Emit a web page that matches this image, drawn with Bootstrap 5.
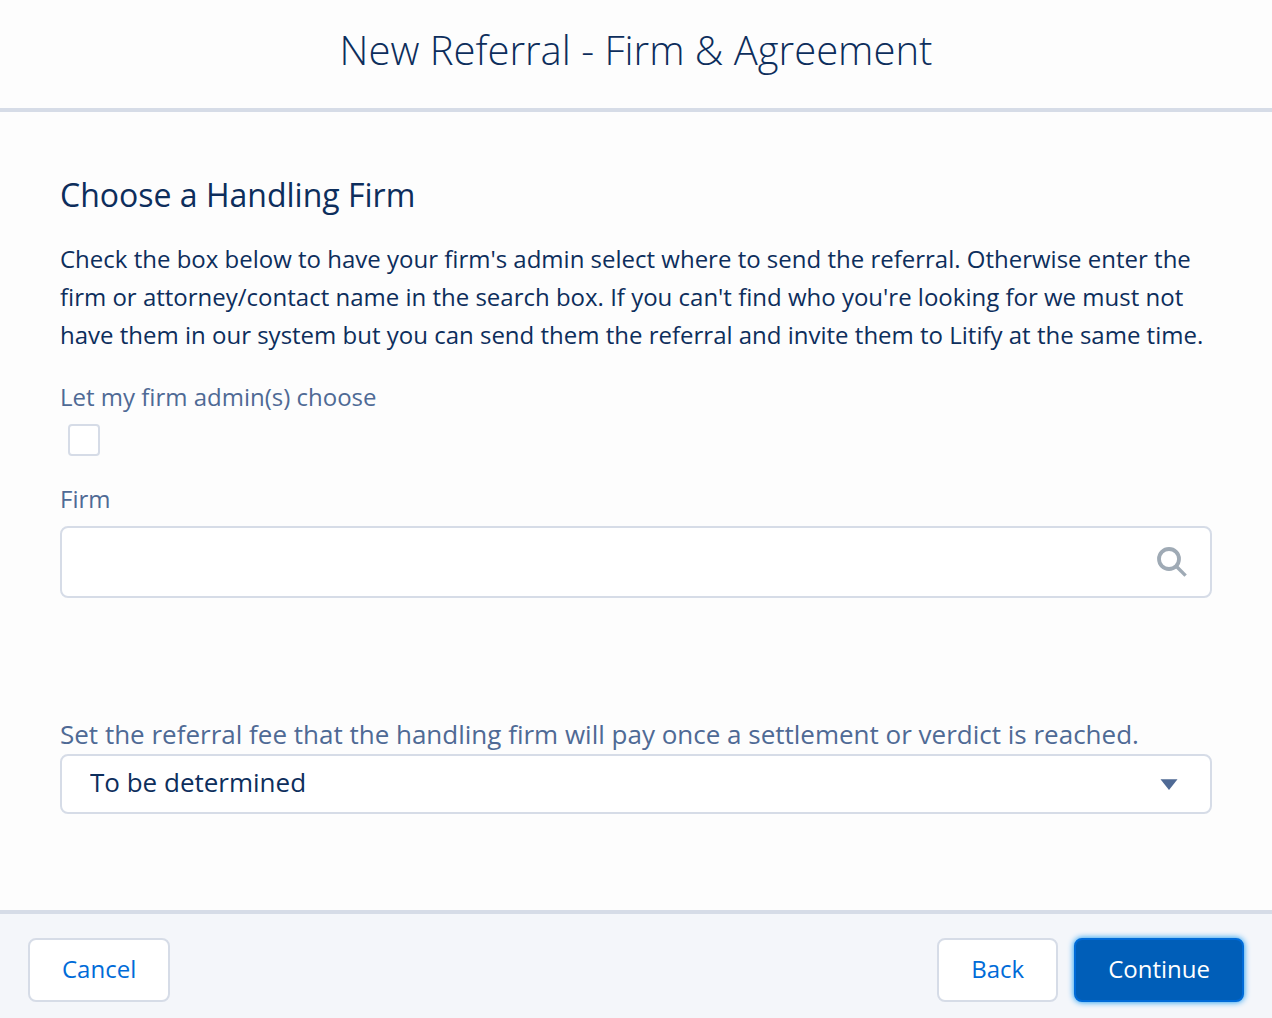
<!DOCTYPE html>
<html lang="en">
<head>
<meta charset="utf-8">
<meta name="viewport" content="width=device-width, initial-scale=1">
<title>New Referral - Firm &amp; Agreement</title>
<link href="https://cdn.jsdelivr.net/npm/bootstrap@5.3.0/dist/css/bootstrap.min.css" rel="stylesheet">
<style>
  :root {
    --navy: #0d2e5c;
    --slate: #4f6a95;
    --line: #d6dce7;
    --link: #006bd8;
  }
  body { font-family: "Open Sans", "Noto Sans", sans-serif; font-size: 24px; line-height: 38px; color: var(--navy); background: #fdfdfd; }
  .dialog-head { border-bottom: 4px solid var(--line); padding: 20px 28px 28px; }
  .dialog-title { font-size: 40px; line-height: 60px; font-weight: 300; }
  .dialog-body { padding: 64px 60px 32px; }
  .section-title { font-size: 32px; line-height: 38px; font-weight: 400; margin-bottom: 26px; }
  .intro { margin-bottom: 24px; }
  .field-label { display: block; color: var(--slate); }
  .fee-label { font-size: 26px; margin-bottom: 1px; }
  .form-check-input.tick { width: 32px; height: 32px; margin: 8px 8px 24px; border: 2px solid var(--line); border-radius: 4px; float: none; display: block; }
  .form-control.firm { height: 72px; margin-top: 8px; padding: 0 80px 0 28px; border: 2px solid var(--line); border-radius: 8px; font-size: 24px; }
  .search-mark { position: absolute; right: 24px; top: 20px; width: 32px; height: 32px; pointer-events: none; }
  .fee-block { margin-top: 117px; }
  .form-select.fee { height: 60px; padding: 0 80px 4px 28px; border: 2px solid var(--line); border-radius: 8px; font-size: 26px; line-height: 38px; color: var(--navy); background-color: #fff;
    background-image: url("data:image/svg+xml,%3Csvg xmlns='http://www.w3.org/2000/svg' viewBox='0 0 18 12'%3E%3Cpath d='M.5 .3h17L9 11z' fill='%234f6a95'/%3E%3C/svg%3E");
    background-size: 18px 12px; background-position: right 32px top 23px; }
  .dialog-foot { border-top: 4px solid var(--line); background: #f4f6fa; padding: 24px 28px 16px; }
  .action { min-height: 64px; padding: 0 32px 2px; border: 2px solid var(--line); border-radius: 8px; font-size: 24px; background: #fff; color: var(--link); }
  .action.main { background: #005eb8; border-color: var(--link); color: #fff; font-weight: 500; box-shadow: 0 0 6px #0090f0; }
</style>
<script src="https://cdn.jsdelivr.net/npm/bootstrap@5.3.0/dist/js/bootstrap.bundle.min.js" defer></script>
</head>
<body>
<form class="d-flex flex-column min-vh-100">
  <header class="dialog-head text-center">
    <h1 class="dialog-title mb-0">New Referral - Firm &amp; Agreement</h1>
  </header>
  <main class="dialog-body flex-grow-1">
    <h2 class="section-title">Choose a Handling Firm</h2>
    <p class="intro">Check the box below to have your firm's admin select where to send the referral. Otherwise enter the firm or attorney/contact name in the search box. If you can't find who you're looking for we must not have them in our system but you can send them the referral and invite them to Litify at the same time.</p>
    <label class="field-label" for="admin">Let my firm admin(s) choose</label>
    <input class="form-check-input tick" type="checkbox" id="admin">
    <label class="field-label" for="firm">Firm</label>
    <div class="position-relative">
      <input class="form-control firm" type="text" id="firm">
      <svg class="search-mark" viewBox="0 0 32 32" fill="none" stroke="#9faab5" aria-hidden="true">
        <circle cx="13" cy="13" r="10" stroke-width="3.8"/>
        <path d="M20 20l9.6 9.6" stroke-width="3.4"/>
      </svg>
    </div>
    <div class="fee-block">
      <label class="field-label fee-label" for="fee">Set the referral fee that the handling firm will pay once a settlement or verdict is reached.</label>
      <select class="form-select fee" id="fee"><option>To be determined</option></select>
    </div>
  </main>
  <footer class="dialog-foot d-flex justify-content-between">
    <button type="button" class="btn action">Cancel</button>
    <div class="d-flex gap-3">
      <button type="button" class="btn action">Back</button>
      <button type="submit" class="btn action main">Continue</button>
    </div>
  </footer>
</form>
</body>
</html>
